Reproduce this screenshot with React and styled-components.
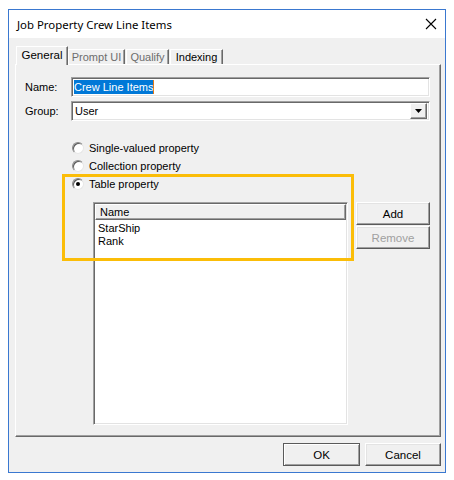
import styled, { createGlobalStyle } from "styled-components";

const GlobalStyle = createGlobalStyle`
  body {
    margin: 0;
    background: #fff;
    font-family: "Liberation Sans", Arial, sans-serif;
    font-size: 11px;
    color: #000;
  }
`;

const Window = styled.div`
  box-sizing: border-box;
  margin: 9px 0 0 8px;
  width: 438px;
  height: 464px;
  border: 1px solid #3a78d0;
  display: flex;
  flex-direction: column;
`;

const TitleBar = styled.div`
  height: 28px;
  background: #fff;
  display: flex;
  align-items: center;
  justify-content: space-between;
  padding: 0 7px 0 8px;
  font-family: "Noto Sans", "Open Sans", sans-serif;
  font-size: 11.4px;
`;

const CloseButton = styled.div`
  width: 14px;
  height: 14px;
  display: flex;
  align-items: center;
  justify-content: center;
`;

const Client = styled.div`
  flex: 1;
  background: #f0f0f0;
  padding: 8px 4px 6px 6px;
  display: flex;
  flex-direction: column;
`;

const TabStrip = styled.div`
  height: 18px;
  display: flex;
  align-items: flex-end;
  padding-left: 1px;
  position: relative;
  z-index: 1;
`;

const Tab = styled.div`
  box-sizing: border-box;
  width: ${(p) => p.$w}px;
  height: ${(p) => (p.$active ? 19 : 15)}px;
  margin-bottom: ${(p) => (p.$active ? -1 : 0)}px;
  margin-left: ${(p) => (p.$gap ? 1 : 0)}px;
  border-top: 1px solid #fff;
  border-left: 1px solid #fff;
  border-right: 1px solid #696969;
  box-shadow: inset -1px 0 0 #a0a0a0;
  background: #f0f0f0;
  color: ${(p) => (p.$disabled ? "#6d6d6d" : "#000")};
  display: flex;
  align-items: center;
  justify-content: center;
  padding-bottom: ${(p) => (p.$active ? 2 : 0)}px;
  font-size: ${(p) => (p.$active ? 11.5 : 11)}px;
`;

const Page = styled.div`
  box-sizing: border-box;
  position: relative;
  height: 373px;
  border-top: 1px solid #fff;
  border-left: 1px solid #fff;
  border-right: 1px solid #696969;
  border-bottom: 1px solid #696969;
  box-shadow: inset -1px -1px 0 #a0a0a0;
  padding: 12px 0 0 9px;
  display: flex;
  flex-direction: column;
`;

const FormGrid = styled.div`
  display: grid;
  grid-template-columns: 46px 359px;
  row-gap: 4px;
  align-items: center;
`;

const Sunken = styled.div`
  box-sizing: border-box;
  height: 20px;
  background: #fff;
  border-top: 1px solid #a0a0a0;
  border-left: 1px solid #a0a0a0;
  border-right: 1px solid #fff;
  border-bottom: 1px solid #fff;
  box-shadow: inset 1px 1px 0 #696969, inset -1px -1px 0 #e3e3e3;
  display: flex;
  align-items: center;
  padding-left: 2px;
`;

const Selected = styled.span`
  background: #0078d7;
  color: #fff;
  padding: 1px 0;
  border-right: 1px solid #e07a1a;
`;

const ComboText = styled.span`
  flex: 1;
  padding-left: 1px;
`;

const ComboButton = styled.div`
  box-sizing: border-box;
  width: 17px;
  height: 16px;
  margin-right: 2px;
  background: #f0f0f0;
  border-top: 1px solid #fff;
  border-left: 1px solid #fff;
  border-right: 1px solid #696969;
  border-bottom: 1px solid #696969;
  box-shadow: inset -1px -1px 0 #a0a0a0;
  display: flex;
  align-items: center;
  justify-content: center;
`;

const RadioGroup = styled.div`
  margin: 18px 0 0 47px;
  display: flex;
  flex-direction: column;
`;

const RadioRow = styled.div`
  height: 18px;
  display: flex;
  align-items: center;
  gap: 5px;
`;

const RadioCircle = styled.div`
  box-sizing: border-box;
  width: 12px;
  height: 12px;
  border-radius: 50%;
  background: #fff;
  border: 1px solid;
  border-color: #8a8a8a #e6e6e6 #e6e6e6 #8a8a8a;
  box-shadow: inset 1px 1px 0 #5a5a5a;
  display: flex;
  align-items: center;
  justify-content: center;

  &::after {
    content: "";
    width: 4px;
    height: 4px;
    border-radius: 50%;
    background: ${(p) => (p.$checked ? "#000" : "transparent")};
  }
`;

const TableArea = styled.div`
  margin: 9px 0 0 68px;
  display: flex;
  gap: 8px;
  align-items: flex-start;
`;

const ListBox = styled.div`
  box-sizing: border-box;
  width: 255px;
  height: 223px;
  background: #fff;
  border-top: 1px solid #a0a0a0;
  border-left: 1px solid #a0a0a0;
  border-right: 1px solid #fff;
  border-bottom: 1px solid #fff;
  box-shadow: inset 1px 1px 0 #696969, inset -1px -1px 0 #e3e3e3;
  padding: 1px;
`;

const ListHeader = styled.div`
  box-sizing: border-box;
  height: 16px;
  background: #f0f0f0;
  border-top: 1px solid #fff;
  border-left: 1px solid #fff;
  border-right: 1px solid #696969;
  border-bottom: 1px solid #696969;
  box-shadow: inset -1px -1px 0 #a0a0a0;
  padding-left: 4px;
  display: flex;
  align-items: center;
`;

const ListItems = styled.div`
  padding: 2px 0 0 3px;
`;

const ListItem = styled.div`
  height: 13px;
  line-height: 13px;
`;

const ButtonColumn = styled.div`
  display: flex;
  flex-direction: column;
  gap: 1px;
`;

const Button = styled.div`
  box-sizing: border-box;
  width: ${(p) => p.$w || 74}px;
  height: 23px;
  background: #f0f0f0;
  border-top: 1px solid ${(p) => (p.$default ? "#5a5a5a" : "#fff")};
  border-left: 1px solid ${(p) => (p.$default ? "#5a5a5a" : "#fff")};
  border-right: 1px solid #5a5a5a;
  border-bottom: 1px solid #5a5a5a;
  box-shadow: ${(p) =>
    p.$default
      ? "inset 1px 1px 0 #fff, inset -1px -1px 0 #a0a0a0"
      : "inset -1px -1px 0 #a0a0a0, inset 1px 1px 0 #e3e3e3"};
  color: ${(p) => (p.$disabled ? "#a0a0a0" : "#000")};
  display: flex;
  align-items: center;
  justify-content: center;
  font-size: 11.5px;
`;

const Highlight = styled.div`
  position: absolute;
  left: 46px;
  top: 109px;
  width: 292px;
  height: 87px;
  box-sizing: border-box;
  border: 3px solid #fbbd08;
  pointer-events: none;
`;

const Footer = styled.div`
  display: flex;
  justify-content: flex-end;
  gap: 5px;
  margin-top: 6px;
`;

const radios = [
  { label: "Single-valued property" },
  { label: "Collection property" },
  { label: "Table property", checked: true },
];

export default function App() {
  return (
    <>
      <GlobalStyle />
      <Window>
        <TitleBar>
          <span>Job Property Crew Line Items</span>
          <CloseButton>
            <svg width="12" height="12" viewBox="0 0 12 12">
              <path d="M1 1 L11 11 M11 1 L1 11" stroke="#000" strokeWidth="1.1" />
            </svg>
          </CloseButton>
        </TitleBar>
        <Client>
          <TabStrip>
            <Tab $active $w={52}>General</Tab>
            <Tab $disabled $w={57}>Prompt UI</Tab>
            <Tab $disabled $gap $w={43}>Qualify</Tab>
            <Tab $gap $w={53}>Indexing</Tab>
          </TabStrip>
          <Page>
            <FormGrid>
              <span>Name:</span>
              <Sunken>
                <Selected>Crew Line Items</Selected>
              </Sunken>
              <span>Group:</span>
              <Sunken>
                <ComboText>User</ComboText>
                <ComboButton>
                  <svg width="7" height="4" viewBox="0 0 7 4">
                    <path d="M0 0 H7 L3.5 4 Z" fill="#000" />
                  </svg>
                </ComboButton>
              </Sunken>
            </FormGrid>
            <RadioGroup>
              {radios.map((r) => (
                <RadioRow key={r.label}>
                  <RadioCircle $checked={r.checked} />
                  <span>{r.label}</span>
                </RadioRow>
              ))}
            </RadioGroup>
            <TableArea>
              <ListBox>
                <ListHeader>Name</ListHeader>
                <ListItems>
                  <ListItem>StarShip</ListItem>
                  <ListItem>Rank</ListItem>
                </ListItems>
              </ListBox>
              <ButtonColumn>
                <Button>Add</Button>
                <Button $disabled>Remove</Button>
              </ButtonColumn>
            </TableArea>
            <Highlight />
          </Page>
          <Footer>
            <Button $w={77} $default>OK</Button>
            <Button $w={76}>Cancel</Button>
          </Footer>
        </Client>
      </Window>
    </>
  );
}
